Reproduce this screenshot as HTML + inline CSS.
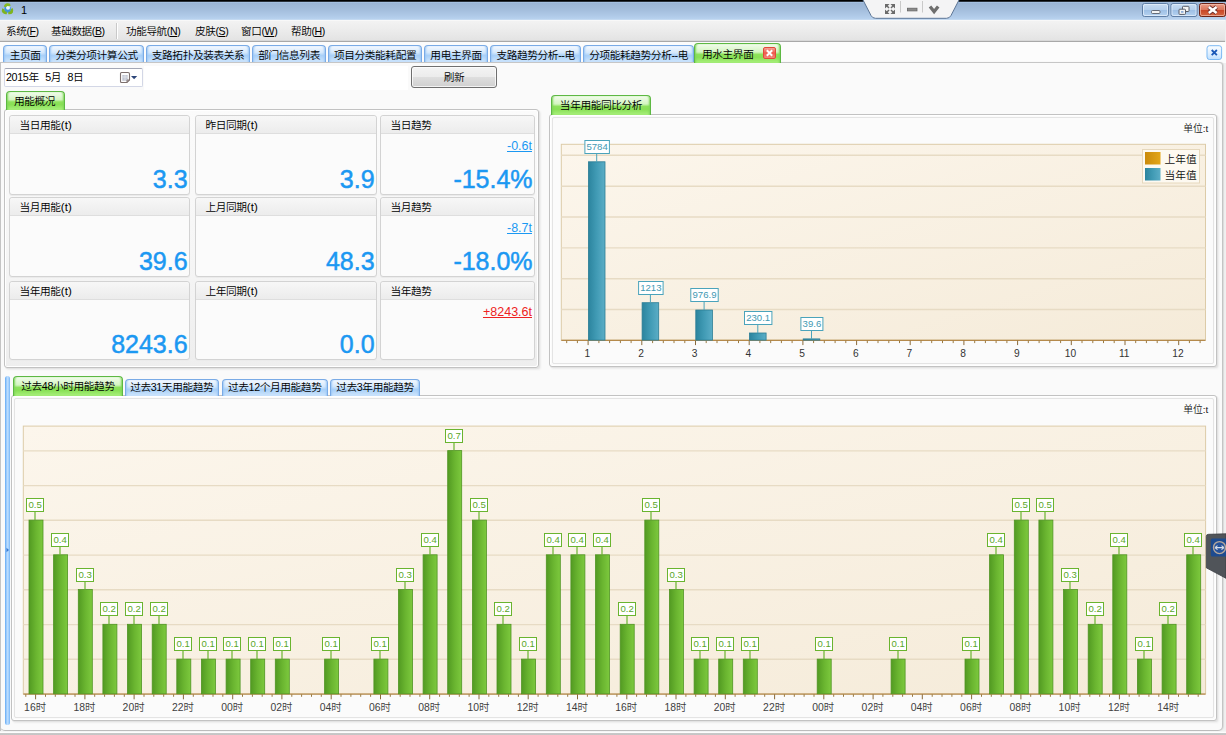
<!DOCTYPE html><html lang="zh"><head><meta charset="utf-8"><title>1</title><style>
*{box-sizing:border-box;margin:0;padding:0}
html,body{width:1226px;height:735px;overflow:hidden}
body{position:relative;background:#f0f0f0;font-family:"Liberation Sans","Noto Sans CJK SC",sans-serif;font-size:10.7px;letter-spacing:-.4px;color:#000;font-weight:350}
.abs{position:absolute}
#titlebar{left:0;top:0;width:1226px;height:20px;background:linear-gradient(#000 0,#000 1.3px,#a9c5e7 2.1px,#9bb5d5 3.2px,#a2bcdb 9px,#aec8e6 15px,#b9d3ef 19.4px,#fafafa 20px)}
#title{left:21px;top:3px;font-size:11px;line-height:14px;color:#000}
#menubar{left:0;top:20px;width:1225px;height:22px;background:linear-gradient(#fbfbfb 0,#f2f2f2 1.5px,#ececec 10px,#e4e4e4 19.500px,#d8d8d8 20.500px,#a8a8a8 21px,#a8a8a8 21.700px,#fdfdfd 22px)}
.mi{position:absolute;top:24px;font-size:10.6px;line-height:14px;white-space:nowrap;color:#000}
.mi u{text-decoration:underline}
#tabstrip{left:0;top:42px;width:1226px;height:21px;background:#fcfcfc}
.tab{position:absolute;top:45px;height:17px;border:1px solid #7aabe6;box-shadow:inset 2px 0 2px -1px #9cc8f6,inset -2px 0 2px -1px #9cc8f6;border-bottom:none;border-radius:4px 4px 0 0;background:linear-gradient(#f4f9ff 0,#d6e9fc 40%,#a9d0f8 60%,#cfe6fc 100%);font-size:10.7px;line-height:18px;text-align:center;white-space:nowrap;color:#000}
.tab.act{top:43px;height:20px;border-color:#5db843;box-shadow:inset 2px 0 2px -1px #7fd65a,inset -2px 0 2px -1px #7fd65a;background:linear-gradient(#f2fcec 0,#d4f5c2 42%,#8ee25c 55%,#88e055 70%,#aaf07e 100%);line-height:20px;text-align:left;padding-left:7px}
#content{left:0;top:62px;width:1223px;height:669px;background:#fafafa;border-top:1px solid #c6c6c6;border-right:1px solid #c4c4c4;border-bottom:1px solid #bcbcbc;border-radius:0 4px 5px 5px;box-shadow:1px 0 1px #dadada}
.gtab{position:absolute;border:1px solid #5db843;box-shadow:inset 2px 0 2px -1px #7fd65a,inset -2px 0 2px -1px #7fd65a;border-bottom:none;border-radius:4px 4px 0 0;background:linear-gradient(#f2fcec 0,#d4f5c2 42%,#8ee25c 55%,#88e055 70%,#aaf07e 100%);font-size:10.7px;text-align:center;white-space:nowrap}
.btab{position:absolute;border:1px solid #7aabe6;box-shadow:inset 2px 0 2px -1px #9cc8f6,inset -2px 0 2px -1px #9cc8f6;border-bottom:none;border-radius:4px 4px 0 0;background:linear-gradient(#f4f9ff 0,#d6e9fc 40%,#a9d0f8 60%,#cfe6fc 100%);font-size:10.7px;text-align:center;white-space:nowrap}
.gbox{position:absolute;border:1px solid #c2c2c2;border-radius:3px;background:linear-gradient(#fbfbfb 0,#f6f6f6 55%,#eeeeee 100%);box-shadow:inset 1px 1px 0 #fff,inset -1px -1px 0 #fff,1px 1px 1px #e2e2e2,2px 2px 2px #eeeeee}
.gbox.ch{background:#fbfbfb}
.gbox.ch:after{content:"";position:absolute;left:2px;top:2px;right:2px;bottom:2px;border:1px solid #e4e4e4;border-radius:2px}
.card{position:absolute;border:1px solid #d3d3d3;border-radius:3px;background:#fbfbfb;box-shadow:0 1px 0 #ebebeb}
.card .hd{position:absolute;left:0;top:0;right:0;height:18px;background:linear-gradient(#f7f7f7,#ececec);border-bottom:1px solid #dedede;border-radius:3px 3px 0 0;padding-left:9.5px;font-size:10.7px;line-height:19px}
.card .big{letter-spacing:0;font-weight:400;position:absolute;right:1.4px;bottom:1px;font-size:25px;line-height:28px;color:#1b98f2;white-space:nowrap;-webkit-text-stroke:.5px #1b98f2}
.card .sm{letter-spacing:0;font-weight:400;position:absolute;right:2px;top:23px;font-size:12.5px;line-height:14px;color:#1b98f2;text-decoration:underline;white-space:nowrap}
svg text{font-family:"Liberation Sans","Noto Sans CJK SC",sans-serif;font-weight:350;letter-spacing:0}
</style></head><body>
<div id="titlebar" class="abs"></div>
<svg class="abs" style="left:0px;top:2px" width="16" height="16" viewBox="0 0 16 16">
<circle cx="7.600" cy="7.400" r="3.300" fill="#3f95dc"/><circle cx="8" cy="5.800" r="2" fill="#e9f4fb"/>
<path d="M3.800 4.800 Q4.500 1.500 7.500 1.300 Q10.300 1.200 10.800 3.600 L8.800 4.300 Q7.500 3.300 6 5 Z" fill="#86bb22"/>
<path d="M2.300 6.300 Q1.200 8.600 2.600 10.800 Q4 12.600 6.800 12.200 L6.900 9.800 Q4.600 10 4.200 7.200 Z" fill="#7fb41f"/>
<path d="M12.600 6 Q14 8.500 12.800 10.700 Q11.300 12.700 8.300 12.200 L8.300 9.800 Q10.800 10 11 7 Z" fill="#7fb41f"/>
</svg>
<div id="title" class="abs">1</div>
<svg class="abs" style="left:858px;top:0" width="106" height="20" viewBox="0 0 106 20">
<path d="M4.500 -1 L13 15.500 Q14.500 18.300 17.500 18.300 L88.500 18.300 Q91.500 18.300 93 15.500 L101.500 -1 Z" fill="#f4f4f5" stroke="#5d7696" stroke-width="1"/>
<g fill="#6b6b6b" stroke="none">
<path d="M27 4 H31.600 L27 8.600 Z M37 4 H32.400 L37 8.600 Z M27 14 H31.600 L27 9.400 Z M37 14 H32.400 L37 9.400 Z"/>
</g>
<path d="M28.300 5.300 L31 8 M35.700 5.300 L33 8 M28.300 12.700 L31 10 M35.700 12.700 L33 10" stroke="#6b6b6b" stroke-width="1.500" fill="none"/>
<path d="M42.500 1 V12.500 M64.500 1 V12.500" stroke="#c9c9c9" stroke-width="1"/>
<rect x="49.400" y="8.200" width="9.600" height="2.700" fill="#8b8b8b" stroke="#666" stroke-width=".8"/>
<path d="M72 6.400 L76.100 11.600 L80.200 6.400" fill="none" stroke="#6e6e6e" stroke-width="3.200" stroke-linejoin="miter"/>
</svg>
<svg class="abs" style="left:1140px;top:2px" width="86" height="17" viewBox="0 0 86 17">
<defs>
<linearGradient id="wb" x1="0" y1="0" x2="0" y2="1"><stop offset="0" stop-color="#c9dcf1"/><stop offset=".48" stop-color="#b5cfec"/><stop offset=".5" stop-color="#9dbfe5"/><stop offset="1" stop-color="#b7d3f0"/></linearGradient>
<linearGradient id="wc" x1="0" y1="0" x2="0" y2="1"><stop offset="0" stop-color="#e9a08c"/><stop offset=".48" stop-color="#d9755b"/><stop offset=".5" stop-color="#c84526"/><stop offset="1" stop-color="#d46a45"/></linearGradient>
</defs>
<rect x="2.5" y="1.5" width="26" height="13" rx="2" fill="url(#wb)" stroke="#5f7ea5"/>
<rect x="3.5" y="2.5" width="24" height="11" rx="1.5" fill="none" stroke="#e2eefb" stroke-opacity=".8"/>
<rect x="11.5" y="8.5" width="8.5" height="3" rx="1" fill="#f4f4f4" stroke="#5a5f6a" stroke-width=".9"/>
<rect x="31" y="1.5" width="26" height="13" rx="2" fill="url(#wb)" stroke="#5f7ea5"/>
<rect x="32" y="2.5" width="24" height="11" rx="1.5" fill="none" stroke="#e2eefb" stroke-opacity=".8"/>
<rect x="42.5" y="4.3" width="6.5" height="5.2" rx=".8" fill="#f4f4f4" stroke="#5a5f6a" stroke-width="1"/>
<rect x="39" y="7.2" width="6.5" height="5.2" rx=".8" fill="#f4f4f4" stroke="#5a5f6a" stroke-width="1"/>
<rect x="41" y="9" width="2.5" height="1.8" fill="#8fb0da"/>
<rect x="59.5" y="1.5" width="26" height="13" rx="2" fill="url(#wc)" stroke="#6b2418"/>
<rect x="60.500" y="2.5" width="24" height="11" rx="1.500" fill="none" stroke="#f4c0b0" stroke-opacity=".7"/>
<path d="M68.800 5 L76.600 11 M76.600 5 L68.800 11" stroke="#6a2e2a" stroke-width="4.200"/>
<path d="M68.800 5 L76.600 11 M76.600 5 L68.800 11" stroke="#fff" stroke-width="2.600"/>
</svg>
<div id="menubar" class="abs"></div>
<div class="mi" style="left:6px">系统(<u>F</u>)</div>
<div class="mi" style="left:51px">基础数据(<u>B</u>)</div>
<div class="mi" style="left:126px">功能导航(<u>N</u>)</div>
<div class="mi" style="left:195px">皮肤(<u>S</u>)</div>
<div class="mi" style="left:241px">窗口(<u>W</u>)</div>
<div class="mi" style="left:291px">帮助(<u>H</u>)</div>
<div class="abs" style="left:116px;top:23px;width:1px;height:16px;background:#c9c9c9"></div><div class="abs" style="left:117px;top:23px;width:1px;height:16px;background:#fff"></div>
<div id="tabstrip" class="abs"></div>
<div id="content" class="abs"></div>
<div class="tab" style="left:2.7px;width:44.8px">主页面</div>
<div class="tab" style="left:48.7px;width:95.8px">分类分项计算公式</div>
<div class="tab" style="left:145.7px;width:104.8px">支路拓扑及装表关系</div>
<div class="tab" style="left:251.7px;width:74.8px">部门信息列表</div>
<div class="tab" style="left:327.7px;width:94.8px">项目分类能耗配置</div>
<div class="tab" style="left:423.7px;width:64.8px">用电主界面</div>
<div class="tab" style="left:489.7px;width:91.8px">支路趋势分析--电</div>
<div class="tab" style="left:582.7px;width:111.8px">分项能耗趋势分析--电</div>
<div class="tab act" style="left:694px;width:87px">用水主界面</div>
<svg class="abs" style="left:763px;top:47px" width="13" height="12" viewBox="0 0 13 12">
<defs><linearGradient id="rx" x1="0" y1="0" x2="0" y2="1"><stop offset="0" stop-color="#f6a9a0"/><stop offset=".5" stop-color="#ee5a4c"/><stop offset="1" stop-color="#f58c80"/></linearGradient></defs>
<rect x=".5" y=".5" width="12" height="11" rx="1.5" fill="url(#rx)" stroke="#e2483a"/>
<path d="M3.800 3.300 L9.200 8.700 M9.200 3.300 L3.800 8.700" stroke="#fff" stroke-width="2"/></svg>
<svg class="abs" style="left:1206px;top:45px" width="17" height="16" viewBox="0 0 17 16">
<defs><linearGradient id="bx" x1="0" y1="0" x2="0" y2="1"><stop offset="0" stop-color="#fafdff"/><stop offset=".5" stop-color="#e3f1ff"/><stop offset="1" stop-color="#bfe0ff"/></linearGradient></defs>
<rect x="1" y=".700" width="14.600" height="13.800" rx="2.500" fill="url(#bx)" stroke="#7db9f3"/>
<path d="M5.700 5 L10.900 10.200 M10.900 5 L5.700 10.200" stroke="#1a58b8" stroke-width="1.800"/></svg>
<div class="abs" style="left:144px;top:66px;width:264px;height:24px;background:#fff"></div>
<div class="abs" style="left:4px;top:68px;width:139px;height:19px;border:1px solid #d3d7e6;border-top-color:#a3a7b5;border-radius:2px;background:#fff;font-size:10.7px;line-height:17px;padding-left:1px;white-space:pre;word-spacing:.6px;letter-spacing:-.35px">2015年  5月  8日</div>
<svg class="abs" style="left:119px;top:71px" width="22" height="13" viewBox="0 0 22 13">
<path d="M2.500 1.500 H9 Q10.500 1.500 10.500 3 V9 L8 11.500 H2.500 Q1.500 11.500 1.500 10.500 V2.500 Q1.500 1.500 2.500 1.500 Z" fill="#fdfdfd" stroke="#7d706e" stroke-width="1.100"/>
<rect x="3.300" y="4" width="5.400" height="5.800" fill="#c2c6d2"/>
<path d="M3.300 6 H8.700 M6 4 V9.800" stroke="#e9ebf1" stroke-width=".7"/>
<path d="M8 11.300 V9 H10.300" fill="none" stroke="#7d706e" stroke-width=".9"/>
<path d="M12 4.900 H18.200 L15.100 8.200 Z" fill="#2c4679"/></svg>
<div class="abs" style="left:411px;top:66px;width:86px;height:22px;border:1px solid #6f6f6f;border-radius:3px;background:linear-gradient(#f4f4f4 0,#ececec 48%,#dedede 52%,#d0d0d0 100%);box-shadow:inset 0 0 0 1px rgba(255,255,255,.75);font-size:10.7px;line-height:20px;text-align:center">刷新</div>
<div class="gbox" style="left:4px;top:109px;width:535px;height:259px"></div>
<div class="gtab" style="left:6px;top:91px;width:59px;height:19px;line-height:18px;text-indent:-2px">用能概况</div>
<div class="card" style="left:9px;top:115px;width:181px;height:80px"><div class="hd">当日用能<span style="font-size:11.5px;letter-spacing:.2px">(t)</span></div><div class="big">3.3</div></div>
<div class="card" style="left:195px;top:115px;width:182px;height:80px"><div class="hd">昨日同期<span style="font-size:11.5px;letter-spacing:.2px">(t)</span></div><div class="big">3.9</div></div>
<div class="card" style="left:380px;top:115px;width:155px;height:80px"><div class="hd">当日趋势</div><div class="sm" style="color:#1b98f2">-0.6t</div><div class="big">-15.4%</div></div>
<div class="card" style="left:9px;top:197px;width:181px;height:80px"><div class="hd">当月用能<span style="font-size:11.5px;letter-spacing:.2px">(t)</span></div><div class="big">39.6</div></div>
<div class="card" style="left:195px;top:197px;width:182px;height:80px"><div class="hd">上月同期<span style="font-size:11.5px;letter-spacing:.2px">(t)</span></div><div class="big">48.3</div></div>
<div class="card" style="left:380px;top:197px;width:155px;height:80px"><div class="hd">当月趋势</div><div class="sm" style="color:#1b98f2">-8.7t</div><div class="big">-18.0%</div></div>
<div class="card" style="left:9px;top:281px;width:181px;height:79px"><div class="hd">当年用能<span style="font-size:11.5px;letter-spacing:.2px">(t)</span></div><div class="big">8243.6</div></div>
<div class="card" style="left:195px;top:281px;width:182px;height:79px"><div class="hd">上年同期<span style="font-size:11.5px;letter-spacing:.2px">(t)</span></div><div class="big">0.0</div></div>
<div class="card" style="left:380px;top:281px;width:155px;height:79px"><div class="hd">当年趋势</div><div class="sm" style="color:#ee2222">+8243.6t</div></div>
<div class="gbox ch" style="left:549px;top:114px;width:668px;height:253px"></div>
<div class="gtab" style="left:551px;top:95px;width:100px;height:20px;line-height:18px">当年用能同比分析</div>
<svg class="abs" style="left:550px;top:115px" width="666" height="251" viewBox="550 115 666 251">
<defs>
<linearGradient id="pbg" x1="0" y1="0" x2="1" y2="1"><stop offset="0" stop-color="#fcf6ec"/><stop offset="1" stop-color="#f5ebd9"/></linearGradient>
<linearGradient id="bl" x1="0" y1="0" x2="1" y2="0"><stop offset="0" stop-color="#2b849e"/><stop offset=".5" stop-color="#419bb5"/><stop offset="1" stop-color="#5badc6"/></linearGradient>
<linearGradient id="og" x1="0" y1="0" x2="1" y2="0"><stop offset="0" stop-color="#c98a0c"/><stop offset="1" stop-color="#e3a619"/></linearGradient>
</defs>
<rect x="561.3" y="144.3" width="644.2" height="195.8" fill="url(#pbg)" stroke="#dccba8" stroke-width="1"/>
<path d="M561.3 309.5 H1205.5" stroke="#e7dbc4" stroke-width="1.400"/>
<path d="M561.3 278.7 H1205.5" stroke="#e7dbc4" stroke-width="1.400"/>
<path d="M561.3 247.9 H1205.5" stroke="#e7dbc4" stroke-width="1.400"/>
<path d="M561.3 217.0 H1205.5" stroke="#e7dbc4" stroke-width="1.400"/>
<path d="M561.3 186.2 H1205.5" stroke="#e7dbc4" stroke-width="1.400"/>
<path d="M561.3 155.3 H1205.5" stroke="#e7dbc4" stroke-width="1.400"/>
<path d="M561.3 340.4 H1205.5" stroke="#b58a4c" stroke-width="1.2"/>
<path d="M588.1 340.6 v4.5" stroke="#8a6a3a" stroke-width="1"/>
<path d="M641.8 340.6 v4.5" stroke="#8a6a3a" stroke-width="1"/>
<path d="M695.5 340.6 v4.5" stroke="#8a6a3a" stroke-width="1"/>
<path d="M749.2 340.6 v4.5" stroke="#8a6a3a" stroke-width="1"/>
<path d="M802.9 340.6 v4.5" stroke="#8a6a3a" stroke-width="1"/>
<path d="M856.6 340.6 v4.5" stroke="#8a6a3a" stroke-width="1"/>
<path d="M910.2 340.6 v4.5" stroke="#8a6a3a" stroke-width="1"/>
<path d="M963.9 340.6 v4.5" stroke="#8a6a3a" stroke-width="1"/>
<path d="M1017.6 340.6 v4.5" stroke="#8a6a3a" stroke-width="1"/>
<path d="M1071.3 340.6 v4.5" stroke="#8a6a3a" stroke-width="1"/>
<path d="M1125.0 340.6 v4.5" stroke="#8a6a3a" stroke-width="1"/>
<path d="M1178.7 340.6 v4.5" stroke="#8a6a3a" stroke-width="1"/>
<path d="M566.7 340.6 v2.5" stroke="#9a7a42" stroke-width="1"/>
<path d="M577.4 340.6 v2.5" stroke="#9a7a42" stroke-width="1"/>
<path d="M598.9 340.6 v2.5" stroke="#9a7a42" stroke-width="1"/>
<path d="M609.6 340.6 v2.5" stroke="#9a7a42" stroke-width="1"/>
<path d="M620.4 340.6 v2.5" stroke="#9a7a42" stroke-width="1"/>
<path d="M631.1 340.6 v2.5" stroke="#9a7a42" stroke-width="1"/>
<path d="M652.6 340.6 v2.5" stroke="#9a7a42" stroke-width="1"/>
<path d="M663.3 340.6 v2.5" stroke="#9a7a42" stroke-width="1"/>
<path d="M674.0 340.6 v2.5" stroke="#9a7a42" stroke-width="1"/>
<path d="M684.8 340.6 v2.5" stroke="#9a7a42" stroke-width="1"/>
<path d="M706.2 340.6 v2.5" stroke="#9a7a42" stroke-width="1"/>
<path d="M717.0 340.6 v2.5" stroke="#9a7a42" stroke-width="1"/>
<path d="M727.7 340.6 v2.5" stroke="#9a7a42" stroke-width="1"/>
<path d="M738.5 340.6 v2.5" stroke="#9a7a42" stroke-width="1"/>
<path d="M759.9 340.6 v2.5" stroke="#9a7a42" stroke-width="1"/>
<path d="M770.7 340.6 v2.5" stroke="#9a7a42" stroke-width="1"/>
<path d="M781.4 340.6 v2.5" stroke="#9a7a42" stroke-width="1"/>
<path d="M792.1 340.6 v2.5" stroke="#9a7a42" stroke-width="1"/>
<path d="M813.6 340.6 v2.5" stroke="#9a7a42" stroke-width="1"/>
<path d="M824.3 340.6 v2.5" stroke="#9a7a42" stroke-width="1"/>
<path d="M835.1 340.6 v2.5" stroke="#9a7a42" stroke-width="1"/>
<path d="M845.8 340.6 v2.5" stroke="#9a7a42" stroke-width="1"/>
<path d="M867.3 340.6 v2.5" stroke="#9a7a42" stroke-width="1"/>
<path d="M878.0 340.6 v2.5" stroke="#9a7a42" stroke-width="1"/>
<path d="M888.8 340.6 v2.5" stroke="#9a7a42" stroke-width="1"/>
<path d="M899.5 340.6 v2.5" stroke="#9a7a42" stroke-width="1"/>
<path d="M921.0 340.6 v2.5" stroke="#9a7a42" stroke-width="1"/>
<path d="M931.7 340.6 v2.5" stroke="#9a7a42" stroke-width="1"/>
<path d="M942.5 340.6 v2.5" stroke="#9a7a42" stroke-width="1"/>
<path d="M953.2 340.6 v2.5" stroke="#9a7a42" stroke-width="1"/>
<path d="M974.7 340.6 v2.5" stroke="#9a7a42" stroke-width="1"/>
<path d="M985.4 340.6 v2.5" stroke="#9a7a42" stroke-width="1"/>
<path d="M996.1 340.6 v2.5" stroke="#9a7a42" stroke-width="1"/>
<path d="M1006.9 340.6 v2.5" stroke="#9a7a42" stroke-width="1"/>
<path d="M1028.3 340.6 v2.5" stroke="#9a7a42" stroke-width="1"/>
<path d="M1039.1 340.6 v2.5" stroke="#9a7a42" stroke-width="1"/>
<path d="M1049.8 340.6 v2.5" stroke="#9a7a42" stroke-width="1"/>
<path d="M1060.6 340.6 v2.5" stroke="#9a7a42" stroke-width="1"/>
<path d="M1082.0 340.6 v2.5" stroke="#9a7a42" stroke-width="1"/>
<path d="M1092.8 340.6 v2.5" stroke="#9a7a42" stroke-width="1"/>
<path d="M1103.5 340.6 v2.5" stroke="#9a7a42" stroke-width="1"/>
<path d="M1114.2 340.6 v2.5" stroke="#9a7a42" stroke-width="1"/>
<path d="M1135.7 340.6 v2.5" stroke="#9a7a42" stroke-width="1"/>
<path d="M1146.4 340.6 v2.5" stroke="#9a7a42" stroke-width="1"/>
<path d="M1157.2 340.6 v2.5" stroke="#9a7a42" stroke-width="1"/>
<path d="M1167.9 340.6 v2.5" stroke="#9a7a42" stroke-width="1"/>
<path d="M1189.4 340.6 v2.5" stroke="#9a7a42" stroke-width="1"/>
<path d="M1200.1 340.6 v2.5" stroke="#9a7a42" stroke-width="1"/>
<rect x="588.4" y="161.8" width="16.6" height="178.3" fill="url(#bl)" stroke="#2b7d95" stroke-width=".8"/>
<path d="M596.7 153.5 V161.8" stroke="#4aa3bb" stroke-width="1"/>
<rect x="584.9" y="140.5" width="24.5" height="13" fill="#fff" stroke="#4aa3bb" stroke-width="1"/>
<text x="597.1" y="150.3" font-size="9.6" text-anchor="middle" fill="#4399b3">5784</text>
<rect x="642.1" y="302.7" width="16.6" height="37.4" fill="url(#bl)" stroke="#2b7d95" stroke-width=".8"/>
<path d="M650.4 294.5 V302.7" stroke="#4aa3bb" stroke-width="1"/>
<rect x="638.6" y="281.5" width="24.5" height="13" fill="#fff" stroke="#4aa3bb" stroke-width="1"/>
<text x="650.8" y="291.3" font-size="9.6" text-anchor="middle" fill="#4399b3">1213</text>
<rect x="695.8" y="310.0" width="16.6" height="30.1" fill="url(#bl)" stroke="#2b7d95" stroke-width=".8"/>
<path d="M704.1 301.5 V310.0" stroke="#4aa3bb" stroke-width="1"/>
<rect x="690.8" y="288.5" width="27.4" height="13" fill="#fff" stroke="#4aa3bb" stroke-width="1"/>
<text x="704.5" y="298.3" font-size="9.6" text-anchor="middle" fill="#4399b3">976.9</text>
<rect x="749.5" y="333.0" width="16.6" height="7.1" fill="url(#bl)" stroke="#2b7d95" stroke-width=".8"/>
<path d="M757.8 324.5 V333.0" stroke="#4aa3bb" stroke-width="1"/>
<rect x="744.5" y="311.5" width="27.4" height="13" fill="#fff" stroke="#4aa3bb" stroke-width="1"/>
<text x="758.2" y="321.3" font-size="9.6" text-anchor="middle" fill="#4399b3">230.1</text>
<rect x="803.2" y="338.9" width="16.6" height="1.2" fill="url(#bl)" stroke="#2b7d95" stroke-width=".8"/>
<path d="M811.5 330.5 V338.9" stroke="#4aa3bb" stroke-width="1"/>
<rect x="800.9" y="317.5" width="22.0" height="13" fill="#fff" stroke="#4aa3bb" stroke-width="1"/>
<text x="811.9" y="327.3" font-size="9.6" text-anchor="middle" fill="#4399b3">39.6</text>
<text x="587.3" y="357" font-size="10.2" text-anchor="middle" fill="#333">1</text>
<text x="641.0" y="357" font-size="10.2" text-anchor="middle" fill="#333">2</text>
<text x="694.7" y="357" font-size="10.2" text-anchor="middle" fill="#333">3</text>
<text x="748.4" y="357" font-size="10.2" text-anchor="middle" fill="#333">4</text>
<text x="802.1" y="357" font-size="10.2" text-anchor="middle" fill="#333">5</text>
<text x="855.8" y="357" font-size="10.2" text-anchor="middle" fill="#333">6</text>
<text x="909.4" y="357" font-size="10.2" text-anchor="middle" fill="#333">7</text>
<text x="963.1" y="357" font-size="10.2" text-anchor="middle" fill="#333">8</text>
<text x="1016.8" y="357" font-size="10.2" text-anchor="middle" fill="#333">9</text>
<text x="1070.5" y="357" font-size="10.2" text-anchor="middle" fill="#333">10</text>
<text x="1124.2" y="357" font-size="10.2" text-anchor="middle" fill="#333">11</text>
<text x="1177.9" y="357" font-size="10.2" text-anchor="middle" fill="#333">12</text>
<text x="1208.300" y="131.800" font-size="9.800" font-weight="400" text-anchor="end" fill="#1a1a1a">单位:t</text>
<rect x="1142.500" y="149.500" width="57" height="33.500" fill="#fdf9f1" stroke="#e6d8bd"/>
<rect x="1145" y="152" width="15.5" height="12.5" fill="url(#og)"/>
<rect x="1145" y="168" width="15.5" height="12.500" fill="url(#bl)"/>
<text x="1164.500" y="162.500" font-size="10.700" letter-spacing="-.4" fill="#111">上年值</text>
<text x="1164.500" y="178.500" font-size="10.700" letter-spacing="-.4" fill="#111">当年值</text>
</svg>
<div class="abs" style="left:0;top:62px;width:1px;height:669px;background:#c4c4c4"></div><div class="abs" style="left:5px;top:376px;width:5px;height:349px;border-radius:2.5px;background:linear-gradient(90deg,#62a9f4,#b9dcff 45%,#b9dcff 60%,#76b5f6)"></div><svg class="abs" style="left:5px;top:546px" width="6" height="8" viewBox="0 0 6 8"><path d="M1.500 1.800 L4 4 L1.500 6.200 Z" fill="#3b7bd2"/></svg>
<div class="gbox ch" style="left:11px;top:395px;width:1206px;height:326px"></div>
<div class="gtab" style="left:13px;top:376px;width:110px;height:20px;line-height:18px">过去48小时用能趋势</div>
<div class="btab" style="left:124.5px;top:379px;width:94.5px;height:17px;line-height:15px">过去31天用能趋势</div>
<div class="btab" style="left:221.5px;top:379px;width:106.5px;height:17px;line-height:15px">过去12个月用能趋势</div>
<div class="btab" style="left:330.0px;top:379px;width:90.0px;height:17px;line-height:15px">过去3年用能趋势</div>
<svg class="abs" style="left:12px;top:396px" width="1204" height="324" viewBox="12 396 1204 324">
<defs>
<linearGradient id="gr" x1="0" y1="0" x2="1" y2="0"><stop offset="0" stop-color="#529a22"/><stop offset=".5" stop-color="#6ab530"/><stop offset="1" stop-color="#7dc93e"/></linearGradient>
</defs>
<rect x="23.3" y="426.1" width="1182.3" height="267.7" fill="url(#pbg)" stroke="#dccba8" stroke-width="1"/>
<path d="M23.3 659.3 H1205.6" stroke="#e7dbc4" stroke-width="1.400"/>
<path d="M23.3 624.6 H1205.6" stroke="#e7dbc4" stroke-width="1.400"/>
<path d="M23.3 589.8 H1205.6" stroke="#e7dbc4" stroke-width="1.400"/>
<path d="M23.3 555.1 H1205.6" stroke="#e7dbc4" stroke-width="1.400"/>
<path d="M23.3 520.3 H1205.6" stroke="#e7dbc4" stroke-width="1.400"/>
<path d="M23.3 485.6 H1205.6" stroke="#e7dbc4" stroke-width="1.400"/>
<path d="M23.3 450.9 H1205.6" stroke="#e7dbc4" stroke-width="1.400"/>
<path d="M23.3 694.1 H1205.6" stroke="#b58a4c" stroke-width="1.2"/>
<path d="M25.8 694.3 v2.5" stroke="#9a7a42" stroke-width="1"/>
<path d="M35.6 694.3 v5" stroke="#8a6a3a" stroke-width="1"/>
<path d="M45.5 694.3 v2.5" stroke="#9a7a42" stroke-width="1"/>
<path d="M55.3 694.3 v2.5" stroke="#9a7a42" stroke-width="1"/>
<path d="M65.2 694.3 v2.5" stroke="#9a7a42" stroke-width="1"/>
<path d="M75.0 694.3 v2.5" stroke="#9a7a42" stroke-width="1"/>
<path d="M84.9 694.3 v5" stroke="#8a6a3a" stroke-width="1"/>
<path d="M94.7 694.3 v2.5" stroke="#9a7a42" stroke-width="1"/>
<path d="M104.6 694.3 v2.5" stroke="#9a7a42" stroke-width="1"/>
<path d="M114.4 694.3 v2.5" stroke="#9a7a42" stroke-width="1"/>
<path d="M124.3 694.3 v2.5" stroke="#9a7a42" stroke-width="1"/>
<path d="M134.1 694.3 v5" stroke="#8a6a3a" stroke-width="1"/>
<path d="M144.0 694.3 v2.5" stroke="#9a7a42" stroke-width="1"/>
<path d="M153.8 694.3 v2.5" stroke="#9a7a42" stroke-width="1"/>
<path d="M163.7 694.3 v2.5" stroke="#9a7a42" stroke-width="1"/>
<path d="M173.6 694.3 v2.5" stroke="#9a7a42" stroke-width="1"/>
<path d="M183.4 694.3 v5" stroke="#8a6a3a" stroke-width="1"/>
<path d="M193.3 694.3 v2.5" stroke="#9a7a42" stroke-width="1"/>
<path d="M203.1 694.3 v2.5" stroke="#9a7a42" stroke-width="1"/>
<path d="M213.0 694.3 v2.5" stroke="#9a7a42" stroke-width="1"/>
<path d="M222.8 694.3 v2.5" stroke="#9a7a42" stroke-width="1"/>
<path d="M232.7 694.3 v5" stroke="#8a6a3a" stroke-width="1"/>
<path d="M242.5 694.3 v2.5" stroke="#9a7a42" stroke-width="1"/>
<path d="M252.4 694.3 v2.5" stroke="#9a7a42" stroke-width="1"/>
<path d="M262.2 694.3 v2.5" stroke="#9a7a42" stroke-width="1"/>
<path d="M272.1 694.3 v2.5" stroke="#9a7a42" stroke-width="1"/>
<path d="M281.9 694.3 v5" stroke="#8a6a3a" stroke-width="1"/>
<path d="M291.8 694.3 v2.5" stroke="#9a7a42" stroke-width="1"/>
<path d="M301.6 694.3 v2.5" stroke="#9a7a42" stroke-width="1"/>
<path d="M311.5 694.3 v2.5" stroke="#9a7a42" stroke-width="1"/>
<path d="M321.3 694.3 v2.5" stroke="#9a7a42" stroke-width="1"/>
<path d="M331.2 694.3 v5" stroke="#8a6a3a" stroke-width="1"/>
<path d="M341.0 694.3 v2.5" stroke="#9a7a42" stroke-width="1"/>
<path d="M350.9 694.3 v2.5" stroke="#9a7a42" stroke-width="1"/>
<path d="M360.7 694.3 v2.5" stroke="#9a7a42" stroke-width="1"/>
<path d="M370.6 694.3 v2.5" stroke="#9a7a42" stroke-width="1"/>
<path d="M380.5 694.3 v5" stroke="#8a6a3a" stroke-width="1"/>
<path d="M390.3 694.3 v2.5" stroke="#9a7a42" stroke-width="1"/>
<path d="M400.2 694.3 v2.5" stroke="#9a7a42" stroke-width="1"/>
<path d="M410.0 694.3 v2.5" stroke="#9a7a42" stroke-width="1"/>
<path d="M419.9 694.3 v2.5" stroke="#9a7a42" stroke-width="1"/>
<path d="M429.7 694.3 v5" stroke="#8a6a3a" stroke-width="1"/>
<path d="M439.6 694.3 v2.5" stroke="#9a7a42" stroke-width="1"/>
<path d="M449.4 694.3 v2.5" stroke="#9a7a42" stroke-width="1"/>
<path d="M459.3 694.3 v2.5" stroke="#9a7a42" stroke-width="1"/>
<path d="M469.1 694.3 v2.5" stroke="#9a7a42" stroke-width="1"/>
<path d="M479.0 694.3 v5" stroke="#8a6a3a" stroke-width="1"/>
<path d="M488.8 694.3 v2.5" stroke="#9a7a42" stroke-width="1"/>
<path d="M498.7 694.3 v2.5" stroke="#9a7a42" stroke-width="1"/>
<path d="M508.5 694.3 v2.5" stroke="#9a7a42" stroke-width="1"/>
<path d="M518.4 694.3 v2.5" stroke="#9a7a42" stroke-width="1"/>
<path d="M528.2 694.3 v5" stroke="#8a6a3a" stroke-width="1"/>
<path d="M538.1 694.3 v2.5" stroke="#9a7a42" stroke-width="1"/>
<path d="M547.9 694.3 v2.5" stroke="#9a7a42" stroke-width="1"/>
<path d="M557.8 694.3 v2.5" stroke="#9a7a42" stroke-width="1"/>
<path d="M567.7 694.3 v2.5" stroke="#9a7a42" stroke-width="1"/>
<path d="M577.5 694.3 v5" stroke="#8a6a3a" stroke-width="1"/>
<path d="M587.4 694.3 v2.5" stroke="#9a7a42" stroke-width="1"/>
<path d="M597.2 694.3 v2.5" stroke="#9a7a42" stroke-width="1"/>
<path d="M607.1 694.3 v2.5" stroke="#9a7a42" stroke-width="1"/>
<path d="M616.9 694.3 v2.5" stroke="#9a7a42" stroke-width="1"/>
<path d="M626.8 694.3 v5" stroke="#8a6a3a" stroke-width="1"/>
<path d="M636.6 694.3 v2.5" stroke="#9a7a42" stroke-width="1"/>
<path d="M646.5 694.3 v2.5" stroke="#9a7a42" stroke-width="1"/>
<path d="M656.3 694.3 v2.5" stroke="#9a7a42" stroke-width="1"/>
<path d="M666.2 694.3 v2.5" stroke="#9a7a42" stroke-width="1"/>
<path d="M676.0 694.3 v5" stroke="#8a6a3a" stroke-width="1"/>
<path d="M685.9 694.3 v2.5" stroke="#9a7a42" stroke-width="1"/>
<path d="M695.7 694.3 v2.5" stroke="#9a7a42" stroke-width="1"/>
<path d="M705.6 694.3 v2.5" stroke="#9a7a42" stroke-width="1"/>
<path d="M715.4 694.3 v2.5" stroke="#9a7a42" stroke-width="1"/>
<path d="M725.3 694.3 v5" stroke="#8a6a3a" stroke-width="1"/>
<path d="M735.1 694.3 v2.5" stroke="#9a7a42" stroke-width="1"/>
<path d="M745.0 694.3 v2.5" stroke="#9a7a42" stroke-width="1"/>
<path d="M754.8 694.3 v2.5" stroke="#9a7a42" stroke-width="1"/>
<path d="M764.7 694.3 v2.5" stroke="#9a7a42" stroke-width="1"/>
<path d="M774.6 694.3 v5" stroke="#8a6a3a" stroke-width="1"/>
<path d="M784.4 694.3 v2.5" stroke="#9a7a42" stroke-width="1"/>
<path d="M794.3 694.3 v2.5" stroke="#9a7a42" stroke-width="1"/>
<path d="M804.1 694.3 v2.5" stroke="#9a7a42" stroke-width="1"/>
<path d="M814.0 694.3 v2.5" stroke="#9a7a42" stroke-width="1"/>
<path d="M823.8 694.3 v5" stroke="#8a6a3a" stroke-width="1"/>
<path d="M833.7 694.3 v2.5" stroke="#9a7a42" stroke-width="1"/>
<path d="M843.5 694.3 v2.5" stroke="#9a7a42" stroke-width="1"/>
<path d="M853.4 694.3 v2.5" stroke="#9a7a42" stroke-width="1"/>
<path d="M863.2 694.3 v2.5" stroke="#9a7a42" stroke-width="1"/>
<path d="M873.1 694.3 v5" stroke="#8a6a3a" stroke-width="1"/>
<path d="M882.9 694.3 v2.5" stroke="#9a7a42" stroke-width="1"/>
<path d="M892.8 694.3 v2.5" stroke="#9a7a42" stroke-width="1"/>
<path d="M902.6 694.3 v2.5" stroke="#9a7a42" stroke-width="1"/>
<path d="M912.5 694.3 v2.5" stroke="#9a7a42" stroke-width="1"/>
<path d="M922.3 694.3 v5" stroke="#8a6a3a" stroke-width="1"/>
<path d="M932.2 694.3 v2.5" stroke="#9a7a42" stroke-width="1"/>
<path d="M942.0 694.3 v2.5" stroke="#9a7a42" stroke-width="1"/>
<path d="M951.9 694.3 v2.5" stroke="#9a7a42" stroke-width="1"/>
<path d="M961.8 694.3 v2.5" stroke="#9a7a42" stroke-width="1"/>
<path d="M971.6 694.3 v5" stroke="#8a6a3a" stroke-width="1"/>
<path d="M981.5 694.3 v2.5" stroke="#9a7a42" stroke-width="1"/>
<path d="M991.3 694.3 v2.5" stroke="#9a7a42" stroke-width="1"/>
<path d="M1001.2 694.3 v2.5" stroke="#9a7a42" stroke-width="1"/>
<path d="M1011.0 694.3 v2.5" stroke="#9a7a42" stroke-width="1"/>
<path d="M1020.9 694.3 v5" stroke="#8a6a3a" stroke-width="1"/>
<path d="M1030.7 694.3 v2.5" stroke="#9a7a42" stroke-width="1"/>
<path d="M1040.6 694.3 v2.5" stroke="#9a7a42" stroke-width="1"/>
<path d="M1050.4 694.3 v2.5" stroke="#9a7a42" stroke-width="1"/>
<path d="M1060.3 694.3 v2.5" stroke="#9a7a42" stroke-width="1"/>
<path d="M1070.1 694.3 v5" stroke="#8a6a3a" stroke-width="1"/>
<path d="M1080.0 694.3 v2.5" stroke="#9a7a42" stroke-width="1"/>
<path d="M1089.8 694.3 v2.5" stroke="#9a7a42" stroke-width="1"/>
<path d="M1099.7 694.3 v2.5" stroke="#9a7a42" stroke-width="1"/>
<path d="M1109.5 694.3 v2.5" stroke="#9a7a42" stroke-width="1"/>
<path d="M1119.4 694.3 v5" stroke="#8a6a3a" stroke-width="1"/>
<path d="M1129.2 694.3 v2.5" stroke="#9a7a42" stroke-width="1"/>
<path d="M1139.1 694.3 v2.5" stroke="#9a7a42" stroke-width="1"/>
<path d="M1148.9 694.3 v2.5" stroke="#9a7a42" stroke-width="1"/>
<path d="M1158.8 694.3 v2.5" stroke="#9a7a42" stroke-width="1"/>
<path d="M1168.7 694.3 v5" stroke="#8a6a3a" stroke-width="1"/>
<path d="M1178.5 694.3 v2.5" stroke="#9a7a42" stroke-width="1"/>
<path d="M1188.4 694.3 v2.5" stroke="#9a7a42" stroke-width="1"/>
<path d="M1198.2 694.3 v2.5" stroke="#9a7a42" stroke-width="1"/>
<rect x="29.0" y="520.1" width="14.0" height="173.7" fill="url(#gr)" stroke="#4f9422" stroke-width=".8"/>
<path d="M35.0 511.5 V520.1" stroke="#6ab42f" stroke-width="1.2"/>
<rect x="26.5" y="498.5" width="17" height="13" fill="#fff" stroke="#6ab42f" stroke-width="1"/>
<text x="35.1" y="508.3" font-size="9.6" text-anchor="middle" fill="#5aa628">0.5</text>
<text x="35.1" y="710.8" font-size="10.4" letter-spacing="-.3" text-anchor="middle" fill="#3e3e3e">16时</text>
<rect x="53.6" y="554.8" width="14.0" height="139.0" fill="url(#gr)" stroke="#4f9422" stroke-width=".8"/>
<path d="M60.0 546.5 V554.8" stroke="#6ab42f" stroke-width="1.2"/>
<rect x="51.5" y="533.5" width="17" height="13" fill="#fff" stroke="#6ab42f" stroke-width="1"/>
<text x="60.1" y="543.3" font-size="9.6" text-anchor="middle" fill="#5aa628">0.4</text>
<rect x="78.3" y="589.6" width="14.0" height="104.2" fill="url(#gr)" stroke="#4f9422" stroke-width=".8"/>
<path d="M85.0 581.5 V589.6" stroke="#6ab42f" stroke-width="1.2"/>
<rect x="76.5" y="568.5" width="17" height="13" fill="#fff" stroke="#6ab42f" stroke-width="1"/>
<text x="85.1" y="578.3" font-size="9.6" text-anchor="middle" fill="#5aa628">0.3</text>
<text x="84.4" y="710.8" font-size="10.4" letter-spacing="-.3" text-anchor="middle" fill="#3e3e3e">18时</text>
<rect x="102.9" y="624.3" width="14.0" height="69.5" fill="url(#gr)" stroke="#4f9422" stroke-width=".8"/>
<path d="M109.0 615.5 V624.3" stroke="#6ab42f" stroke-width="1.2"/>
<rect x="100.5" y="602.5" width="17" height="13" fill="#fff" stroke="#6ab42f" stroke-width="1"/>
<text x="109.1" y="612.3" font-size="9.6" text-anchor="middle" fill="#5aa628">0.2</text>
<rect x="127.5" y="624.3" width="14.0" height="69.5" fill="url(#gr)" stroke="#4f9422" stroke-width=".8"/>
<path d="M134.0 615.5 V624.3" stroke="#6ab42f" stroke-width="1.2"/>
<rect x="125.5" y="602.5" width="17" height="13" fill="#fff" stroke="#6ab42f" stroke-width="1"/>
<text x="134.1" y="612.3" font-size="9.6" text-anchor="middle" fill="#5aa628">0.2</text>
<text x="133.6" y="710.8" font-size="10.4" letter-spacing="-.3" text-anchor="middle" fill="#3e3e3e">20时</text>
<rect x="152.2" y="624.3" width="14.0" height="69.5" fill="url(#gr)" stroke="#4f9422" stroke-width=".8"/>
<path d="M159.0 615.5 V624.3" stroke="#6ab42f" stroke-width="1.2"/>
<rect x="150.5" y="602.5" width="17" height="13" fill="#fff" stroke="#6ab42f" stroke-width="1"/>
<text x="159.1" y="612.3" font-size="9.6" text-anchor="middle" fill="#5aa628">0.2</text>
<rect x="176.8" y="659.1" width="14.0" height="34.7" fill="url(#gr)" stroke="#4f9422" stroke-width=".8"/>
<path d="M183.0 650.5 V659.1" stroke="#6ab42f" stroke-width="1.2"/>
<rect x="174.5" y="637.5" width="17" height="13" fill="#fff" stroke="#6ab42f" stroke-width="1"/>
<text x="183.1" y="647.3" font-size="9.6" text-anchor="middle" fill="#5aa628">0.1</text>
<text x="182.9" y="710.8" font-size="10.4" letter-spacing="-.3" text-anchor="middle" fill="#3e3e3e">22时</text>
<rect x="201.4" y="659.1" width="14.0" height="34.7" fill="url(#gr)" stroke="#4f9422" stroke-width=".8"/>
<path d="M208.0 650.5 V659.1" stroke="#6ab42f" stroke-width="1.2"/>
<rect x="199.5" y="637.5" width="17" height="13" fill="#fff" stroke="#6ab42f" stroke-width="1"/>
<text x="208.1" y="647.3" font-size="9.6" text-anchor="middle" fill="#5aa628">0.1</text>
<rect x="226.1" y="659.1" width="14.0" height="34.7" fill="url(#gr)" stroke="#4f9422" stroke-width=".8"/>
<path d="M232.0 650.5 V659.1" stroke="#6ab42f" stroke-width="1.2"/>
<rect x="223.5" y="637.5" width="17" height="13" fill="#fff" stroke="#6ab42f" stroke-width="1"/>
<text x="232.1" y="647.3" font-size="9.6" text-anchor="middle" fill="#5aa628">0.1</text>
<text x="232.2" y="710.8" font-size="10.4" letter-spacing="-.3" text-anchor="middle" fill="#3e3e3e">00时</text>
<rect x="250.7" y="659.1" width="14.0" height="34.7" fill="url(#gr)" stroke="#4f9422" stroke-width=".8"/>
<path d="M257.0 650.5 V659.1" stroke="#6ab42f" stroke-width="1.2"/>
<rect x="248.5" y="637.5" width="17" height="13" fill="#fff" stroke="#6ab42f" stroke-width="1"/>
<text x="257.1" y="647.3" font-size="9.6" text-anchor="middle" fill="#5aa628">0.1</text>
<rect x="275.3" y="659.1" width="14.0" height="34.7" fill="url(#gr)" stroke="#4f9422" stroke-width=".8"/>
<path d="M282.0 650.5 V659.1" stroke="#6ab42f" stroke-width="1.2"/>
<rect x="273.5" y="637.5" width="17" height="13" fill="#fff" stroke="#6ab42f" stroke-width="1"/>
<text x="282.1" y="647.3" font-size="9.6" text-anchor="middle" fill="#5aa628">0.1</text>
<text x="281.4" y="710.8" font-size="10.4" letter-spacing="-.3" text-anchor="middle" fill="#3e3e3e">02时</text>
<rect x="324.6" y="659.1" width="14.0" height="34.7" fill="url(#gr)" stroke="#4f9422" stroke-width=".8"/>
<path d="M331.0 650.5 V659.1" stroke="#6ab42f" stroke-width="1.2"/>
<rect x="322.5" y="637.5" width="17" height="13" fill="#fff" stroke="#6ab42f" stroke-width="1"/>
<text x="331.1" y="647.3" font-size="9.6" text-anchor="middle" fill="#5aa628">0.1</text>
<text x="330.7" y="710.8" font-size="10.4" letter-spacing="-.3" text-anchor="middle" fill="#3e3e3e">04时</text>
<rect x="373.9" y="659.1" width="14.0" height="34.7" fill="url(#gr)" stroke="#4f9422" stroke-width=".8"/>
<path d="M380.0 650.5 V659.1" stroke="#6ab42f" stroke-width="1.2"/>
<rect x="371.5" y="637.5" width="17" height="13" fill="#fff" stroke="#6ab42f" stroke-width="1"/>
<text x="380.1" y="647.3" font-size="9.6" text-anchor="middle" fill="#5aa628">0.1</text>
<text x="380.0" y="710.8" font-size="10.4" letter-spacing="-.3" text-anchor="middle" fill="#3e3e3e">06时</text>
<rect x="398.5" y="589.6" width="14.0" height="104.2" fill="url(#gr)" stroke="#4f9422" stroke-width=".8"/>
<path d="M405.0 581.5 V589.6" stroke="#6ab42f" stroke-width="1.2"/>
<rect x="396.5" y="568.5" width="17" height="13" fill="#fff" stroke="#6ab42f" stroke-width="1"/>
<text x="405.1" y="578.3" font-size="9.6" text-anchor="middle" fill="#5aa628">0.3</text>
<rect x="423.1" y="554.8" width="14.0" height="139.0" fill="url(#gr)" stroke="#4f9422" stroke-width=".8"/>
<path d="M430.0 546.5 V554.8" stroke="#6ab42f" stroke-width="1.2"/>
<rect x="421.5" y="533.5" width="17" height="13" fill="#fff" stroke="#6ab42f" stroke-width="1"/>
<text x="430.1" y="543.3" font-size="9.6" text-anchor="middle" fill="#5aa628">0.4</text>
<text x="429.2" y="710.8" font-size="10.4" letter-spacing="-.3" text-anchor="middle" fill="#3e3e3e">08时</text>
<rect x="447.7" y="450.6" width="14.0" height="243.2" fill="url(#gr)" stroke="#4f9422" stroke-width=".8"/>
<path d="M454.0 442.5 V450.6" stroke="#6ab42f" stroke-width="1.2"/>
<rect x="445.5" y="429.5" width="17" height="13" fill="#fff" stroke="#6ab42f" stroke-width="1"/>
<text x="454.1" y="439.3" font-size="9.6" text-anchor="middle" fill="#5aa628">0.7</text>
<rect x="472.4" y="520.1" width="14.0" height="173.7" fill="url(#gr)" stroke="#4f9422" stroke-width=".8"/>
<path d="M479.0 511.5 V520.1" stroke="#6ab42f" stroke-width="1.2"/>
<rect x="470.5" y="498.5" width="17" height="13" fill="#fff" stroke="#6ab42f" stroke-width="1"/>
<text x="479.1" y="508.3" font-size="9.6" text-anchor="middle" fill="#5aa628">0.5</text>
<text x="478.5" y="710.8" font-size="10.4" letter-spacing="-.3" text-anchor="middle" fill="#3e3e3e">10时</text>
<rect x="497.0" y="624.3" width="14.0" height="69.5" fill="url(#gr)" stroke="#4f9422" stroke-width=".8"/>
<path d="M503.0 615.5 V624.3" stroke="#6ab42f" stroke-width="1.2"/>
<rect x="494.5" y="602.5" width="17" height="13" fill="#fff" stroke="#6ab42f" stroke-width="1"/>
<text x="503.1" y="612.3" font-size="9.6" text-anchor="middle" fill="#5aa628">0.2</text>
<rect x="521.6" y="659.1" width="14.0" height="34.7" fill="url(#gr)" stroke="#4f9422" stroke-width=".8"/>
<path d="M528.0 650.5 V659.1" stroke="#6ab42f" stroke-width="1.2"/>
<rect x="519.5" y="637.5" width="17" height="13" fill="#fff" stroke="#6ab42f" stroke-width="1"/>
<text x="528.1" y="647.3" font-size="9.6" text-anchor="middle" fill="#5aa628">0.1</text>
<text x="527.7" y="710.8" font-size="10.4" letter-spacing="-.3" text-anchor="middle" fill="#3e3e3e">12时</text>
<rect x="546.3" y="554.8" width="14.0" height="139.0" fill="url(#gr)" stroke="#4f9422" stroke-width=".8"/>
<path d="M553.0 546.5 V554.8" stroke="#6ab42f" stroke-width="1.2"/>
<rect x="544.5" y="533.5" width="17" height="13" fill="#fff" stroke="#6ab42f" stroke-width="1"/>
<text x="553.1" y="543.3" font-size="9.6" text-anchor="middle" fill="#5aa628">0.4</text>
<rect x="570.9" y="554.8" width="14.0" height="139.0" fill="url(#gr)" stroke="#4f9422" stroke-width=".8"/>
<path d="M577.0 546.5 V554.8" stroke="#6ab42f" stroke-width="1.2"/>
<rect x="568.5" y="533.5" width="17" height="13" fill="#fff" stroke="#6ab42f" stroke-width="1"/>
<text x="577.1" y="543.3" font-size="9.6" text-anchor="middle" fill="#5aa628">0.4</text>
<text x="577.0" y="710.8" font-size="10.4" letter-spacing="-.3" text-anchor="middle" fill="#3e3e3e">14时</text>
<rect x="595.5" y="554.8" width="14.0" height="139.0" fill="url(#gr)" stroke="#4f9422" stroke-width=".8"/>
<path d="M602.0 546.5 V554.8" stroke="#6ab42f" stroke-width="1.2"/>
<rect x="593.5" y="533.5" width="17" height="13" fill="#fff" stroke="#6ab42f" stroke-width="1"/>
<text x="602.1" y="543.3" font-size="9.6" text-anchor="middle" fill="#5aa628">0.4</text>
<rect x="620.2" y="624.3" width="14.0" height="69.5" fill="url(#gr)" stroke="#4f9422" stroke-width=".8"/>
<path d="M627.0 615.5 V624.3" stroke="#6ab42f" stroke-width="1.2"/>
<rect x="618.5" y="602.5" width="17" height="13" fill="#fff" stroke="#6ab42f" stroke-width="1"/>
<text x="627.1" y="612.3" font-size="9.6" text-anchor="middle" fill="#5aa628">0.2</text>
<text x="626.3" y="710.8" font-size="10.4" letter-spacing="-.3" text-anchor="middle" fill="#3e3e3e">16时</text>
<rect x="644.8" y="520.1" width="14.0" height="173.7" fill="url(#gr)" stroke="#4f9422" stroke-width=".8"/>
<path d="M651.0 511.5 V520.1" stroke="#6ab42f" stroke-width="1.2"/>
<rect x="642.5" y="498.5" width="17" height="13" fill="#fff" stroke="#6ab42f" stroke-width="1"/>
<text x="651.1" y="508.3" font-size="9.6" text-anchor="middle" fill="#5aa628">0.5</text>
<rect x="669.4" y="589.6" width="14.0" height="104.2" fill="url(#gr)" stroke="#4f9422" stroke-width=".8"/>
<path d="M676.0 581.5 V589.6" stroke="#6ab42f" stroke-width="1.2"/>
<rect x="667.5" y="568.5" width="17" height="13" fill="#fff" stroke="#6ab42f" stroke-width="1"/>
<text x="676.1" y="578.3" font-size="9.6" text-anchor="middle" fill="#5aa628">0.3</text>
<text x="675.5" y="710.8" font-size="10.4" letter-spacing="-.3" text-anchor="middle" fill="#3e3e3e">18时</text>
<rect x="694.1" y="659.1" width="14.0" height="34.7" fill="url(#gr)" stroke="#4f9422" stroke-width=".8"/>
<path d="M700.0 650.5 V659.1" stroke="#6ab42f" stroke-width="1.2"/>
<rect x="691.5" y="637.5" width="17" height="13" fill="#fff" stroke="#6ab42f" stroke-width="1"/>
<text x="700.1" y="647.3" font-size="9.6" text-anchor="middle" fill="#5aa628">0.1</text>
<rect x="718.7" y="659.1" width="14.0" height="34.7" fill="url(#gr)" stroke="#4f9422" stroke-width=".8"/>
<path d="M725.0 650.5 V659.1" stroke="#6ab42f" stroke-width="1.2"/>
<rect x="716.5" y="637.5" width="17" height="13" fill="#fff" stroke="#6ab42f" stroke-width="1"/>
<text x="725.1" y="647.3" font-size="9.6" text-anchor="middle" fill="#5aa628">0.1</text>
<text x="724.8" y="710.8" font-size="10.4" letter-spacing="-.3" text-anchor="middle" fill="#3e3e3e">20时</text>
<rect x="743.3" y="659.1" width="14.0" height="34.7" fill="url(#gr)" stroke="#4f9422" stroke-width=".8"/>
<path d="M750.0 650.5 V659.1" stroke="#6ab42f" stroke-width="1.2"/>
<rect x="741.5" y="637.5" width="17" height="13" fill="#fff" stroke="#6ab42f" stroke-width="1"/>
<text x="750.1" y="647.3" font-size="9.6" text-anchor="middle" fill="#5aa628">0.1</text>
<text x="774.1" y="710.8" font-size="10.4" letter-spacing="-.3" text-anchor="middle" fill="#3e3e3e">22时</text>
<rect x="817.2" y="659.1" width="14.0" height="34.7" fill="url(#gr)" stroke="#4f9422" stroke-width=".8"/>
<path d="M824.0 650.5 V659.1" stroke="#6ab42f" stroke-width="1.2"/>
<rect x="815.5" y="637.5" width="17" height="13" fill="#fff" stroke="#6ab42f" stroke-width="1"/>
<text x="824.1" y="647.3" font-size="9.6" text-anchor="middle" fill="#5aa628">0.1</text>
<text x="823.3" y="710.8" font-size="10.4" letter-spacing="-.3" text-anchor="middle" fill="#3e3e3e">00时</text>
<text x="872.6" y="710.8" font-size="10.4" letter-spacing="-.3" text-anchor="middle" fill="#3e3e3e">02时</text>
<rect x="891.1" y="659.1" width="14.0" height="34.7" fill="url(#gr)" stroke="#4f9422" stroke-width=".8"/>
<path d="M898.0 650.5 V659.1" stroke="#6ab42f" stroke-width="1.2"/>
<rect x="889.5" y="637.5" width="17" height="13" fill="#fff" stroke="#6ab42f" stroke-width="1"/>
<text x="898.1" y="647.3" font-size="9.6" text-anchor="middle" fill="#5aa628">0.1</text>
<text x="921.8" y="710.8" font-size="10.4" letter-spacing="-.3" text-anchor="middle" fill="#3e3e3e">04时</text>
<rect x="965.0" y="659.1" width="14.0" height="34.7" fill="url(#gr)" stroke="#4f9422" stroke-width=".8"/>
<path d="M971.0 650.5 V659.1" stroke="#6ab42f" stroke-width="1.2"/>
<rect x="962.5" y="637.5" width="17" height="13" fill="#fff" stroke="#6ab42f" stroke-width="1"/>
<text x="971.1" y="647.3" font-size="9.6" text-anchor="middle" fill="#5aa628">0.1</text>
<text x="971.1" y="710.8" font-size="10.4" letter-spacing="-.3" text-anchor="middle" fill="#3e3e3e">06时</text>
<rect x="989.6" y="554.8" width="14.0" height="139.0" fill="url(#gr)" stroke="#4f9422" stroke-width=".8"/>
<path d="M996.0 546.5 V554.8" stroke="#6ab42f" stroke-width="1.2"/>
<rect x="987.5" y="533.5" width="17" height="13" fill="#fff" stroke="#6ab42f" stroke-width="1"/>
<text x="996.1" y="543.3" font-size="9.6" text-anchor="middle" fill="#5aa628">0.4</text>
<rect x="1014.3" y="520.1" width="14.0" height="173.7" fill="url(#gr)" stroke="#4f9422" stroke-width=".8"/>
<path d="M1021.0 511.5 V520.1" stroke="#6ab42f" stroke-width="1.2"/>
<rect x="1012.5" y="498.5" width="17" height="13" fill="#fff" stroke="#6ab42f" stroke-width="1"/>
<text x="1021.1" y="508.3" font-size="9.6" text-anchor="middle" fill="#5aa628">0.5</text>
<text x="1020.4" y="710.8" font-size="10.4" letter-spacing="-.3" text-anchor="middle" fill="#3e3e3e">08时</text>
<rect x="1038.9" y="520.1" width="14.0" height="173.7" fill="url(#gr)" stroke="#4f9422" stroke-width=".8"/>
<path d="M1045.0 511.5 V520.1" stroke="#6ab42f" stroke-width="1.2"/>
<rect x="1036.5" y="498.5" width="17" height="13" fill="#fff" stroke="#6ab42f" stroke-width="1"/>
<text x="1045.1" y="508.3" font-size="9.6" text-anchor="middle" fill="#5aa628">0.5</text>
<rect x="1063.5" y="589.6" width="14.0" height="104.2" fill="url(#gr)" stroke="#4f9422" stroke-width=".8"/>
<path d="M1070.0 581.5 V589.6" stroke="#6ab42f" stroke-width="1.2"/>
<rect x="1061.5" y="568.5" width="17" height="13" fill="#fff" stroke="#6ab42f" stroke-width="1"/>
<text x="1070.1" y="578.3" font-size="9.6" text-anchor="middle" fill="#5aa628">0.3</text>
<text x="1069.6" y="710.8" font-size="10.4" letter-spacing="-.3" text-anchor="middle" fill="#3e3e3e">10时</text>
<rect x="1088.2" y="624.3" width="14.0" height="69.5" fill="url(#gr)" stroke="#4f9422" stroke-width=".8"/>
<path d="M1095.0 615.5 V624.3" stroke="#6ab42f" stroke-width="1.2"/>
<rect x="1086.5" y="602.5" width="17" height="13" fill="#fff" stroke="#6ab42f" stroke-width="1"/>
<text x="1095.1" y="612.3" font-size="9.6" text-anchor="middle" fill="#5aa628">0.2</text>
<rect x="1112.8" y="554.8" width="14.0" height="139.0" fill="url(#gr)" stroke="#4f9422" stroke-width=".8"/>
<path d="M1119.0 546.5 V554.8" stroke="#6ab42f" stroke-width="1.2"/>
<rect x="1110.5" y="533.5" width="17" height="13" fill="#fff" stroke="#6ab42f" stroke-width="1"/>
<text x="1119.1" y="543.3" font-size="9.6" text-anchor="middle" fill="#5aa628">0.4</text>
<text x="1118.9" y="710.8" font-size="10.4" letter-spacing="-.3" text-anchor="middle" fill="#3e3e3e">12时</text>
<rect x="1137.4" y="659.1" width="14.0" height="34.7" fill="url(#gr)" stroke="#4f9422" stroke-width=".8"/>
<path d="M1144.0 650.5 V659.1" stroke="#6ab42f" stroke-width="1.2"/>
<rect x="1135.5" y="637.5" width="17" height="13" fill="#fff" stroke="#6ab42f" stroke-width="1"/>
<text x="1144.1" y="647.3" font-size="9.6" text-anchor="middle" fill="#5aa628">0.1</text>
<rect x="1162.1" y="624.3" width="14.0" height="69.5" fill="url(#gr)" stroke="#4f9422" stroke-width=".8"/>
<path d="M1168.0 615.5 V624.3" stroke="#6ab42f" stroke-width="1.2"/>
<rect x="1159.5" y="602.5" width="17" height="13" fill="#fff" stroke="#6ab42f" stroke-width="1"/>
<text x="1168.1" y="612.3" font-size="9.6" text-anchor="middle" fill="#5aa628">0.2</text>
<text x="1168.2" y="710.8" font-size="10.4" letter-spacing="-.3" text-anchor="middle" fill="#3e3e3e">14时</text>
<rect x="1186.7" y="554.8" width="14.0" height="139.0" fill="url(#gr)" stroke="#4f9422" stroke-width=".8"/>
<path d="M1193.0 546.5 V554.8" stroke="#6ab42f" stroke-width="1.2"/>
<rect x="1184.5" y="533.5" width="17" height="13" fill="#fff" stroke="#6ab42f" stroke-width="1"/>
<text x="1193.1" y="543.3" font-size="9.6" text-anchor="middle" fill="#5aa628">0.4</text>
<text x="1208.300" y="413.300" font-size="9.800" font-weight="400" text-anchor="end" fill="#1a1a1a">单位:t</text>
</svg>
<svg class="abs" style="left:1204px;top:530px" width="22" height="52" viewBox="1204 530 22 52">
<path d="M1208.500 534.300 L1226 533.800 V578.300 L1206.300 567.800 L1206.300 536.500 Q1206.300 534.300 1208.500 534.300 Z" fill="#505459" stroke="#3b3e43" stroke-width=".8"/>
<rect x="1210.800" y="538.600" width="16" height="18" rx="1.500" fill="#1d4b8f"/>
<circle cx="1219.500" cy="547.600" r="6" fill="#25529a" stroke="#b7a79a" stroke-width="1.400"/>
<path d="M1215 547.600 H1224 M1215 547.600 l2.500 -2 M1215 547.600 l2.500 2 M1224 547.600 l-2.500 -2 M1224 547.600 l-2.500 2" stroke="#d8dde6" stroke-width="1.200" fill="none"/>
</svg>
<div class="abs" style="left:0;top:731px;width:1226px;height:4px;background:linear-gradient(#ececec 0,#fdfdfd 1px,#fdfdfd 1.6px,#c9c9c9 2.2px,#c4c4c4 4px)"></div>
</body></html>
